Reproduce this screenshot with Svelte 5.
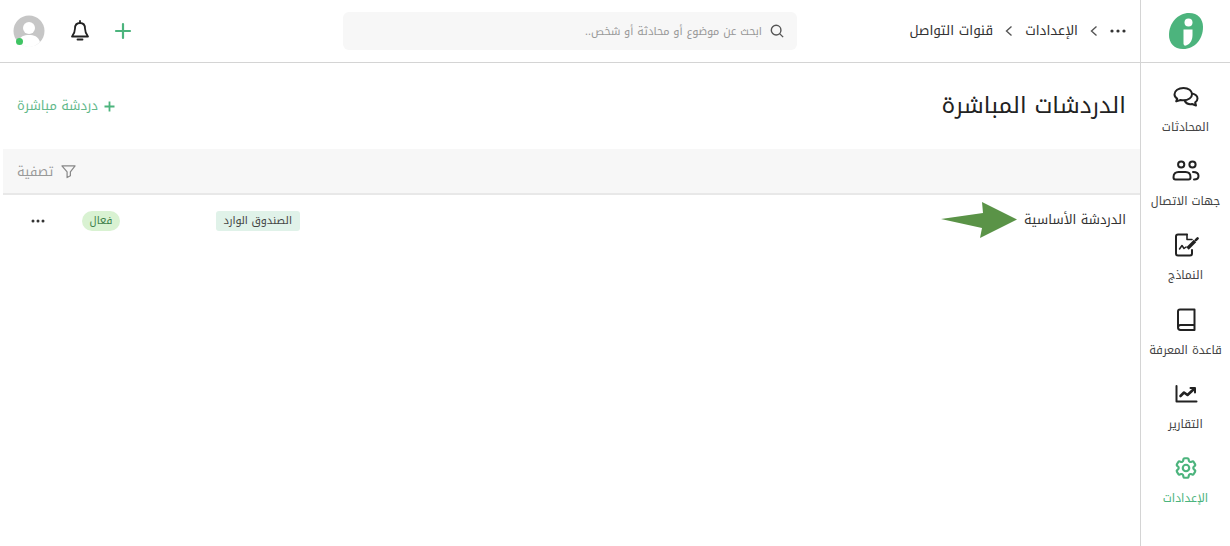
<script>
	const nav = [
		{ label: 'المحادثات', icon: 'chat' },
		{ label: 'جهات الاتصال', icon: 'people' },
		{ label: 'النماذج', icon: 'form' },
		{ label: 'قاعدة المعرفة', icon: 'book' },
		{ label: 'التقارير', icon: 'chart' },
		{ label: 'الإعدادات', icon: 'gear', active: true }
	];
</script>

<div class="app" dir="rtl">
	<aside class="sidebar">
		<div class="logo-cell">
			<svg width="36" height="38" viewBox="0 0 36 38">
				<path d="M21 1C30 1 35 7 35 15C35 27 27 37 15 37C6 37 1 31 1 23C1 11 10 1 21 1Z" fill="#4cb47d" />
				<circle cx="20.5" cy="10.5" r="4" fill="#fff" />
				<path d="M15.5 17.5H24.5V23C24.5 28 22.5 32 18 33.5C16.5 34 15.5 33 15.5 31.5Z" fill="#fff" />
			</svg>
		</div>
		<nav class="nav">
			{#each nav as item}
				<div class="nav-item" class:active={item.active}>
					<svg class="nav-icon" width="28" height="26" viewBox="0 0 28 26" fill="none" stroke="currentColor" stroke-width="2" stroke-linecap="round" stroke-linejoin="round">
						{#if item.icon === 'chat'}
							<path d="M11.5 4C6.5 4 2.5 6.6 2.5 10.2C2.5 12.2 3.6 13.7 5.2 14.6L4.2 17.4L8.6 16C9.4 16.2 10.4 16.3 11.5 16.3C16.5 16.3 20 13.6 20 10.2C20 6.6 16.5 4 11.5 4Z" />
							<path d="M20 9.4C23.2 10.2 25.5 12 25.5 14.6C25.5 16.3 24.5 17.6 23.2 18.4L24 21.5L20 20C17.6 20.6 14.6 19.8 13 17.4" />
						{:else if item.icon === 'people'}
							<circle cx="9.2" cy="6.5" r="3.1" />
							<circle cx="20.5" cy="6.5" r="3.1" />
							<path d="M3.5 21.5C2 21.5 1.5 20.5 1.5 19.2C1.5 15.8 3.5 14 6.5 14H13.5C16.5 14 18.5 15.8 18.5 19.2C18.5 20.5 18 21.5 16.5 21.5Z" />
							<path d="M21 14C24.5 14 26.5 15.8 26.5 18C26.5 20.2 25 21.5 22 21.5" />
						{:else if item.icon === 'form'}
							<path d="M15 2.5H6C4.9 2.5 4 3.4 4 4.5V21.5C4 22.6 4.9 23.5 6 23.5H18C19.1 23.5 20 22.6 20 21.5V18" />
							<path d="M15 2.5V7.5H20" stroke-width="1.6" />
							<path d="M7.5 17L10 13.5L12 16.5L14 15" stroke-width="1.5" />
							<path d="M15.5 16.5L23 9" stroke-width="3.4" stroke-linecap="butt" />
							<path d="M23.8 8.2L25.6 6.4" stroke-width="2.6" />
						{:else if item.icon === 'book'}
							<path d="M6 20V4.5C6 3.4 6.9 2.5 8 2.5H22.5V23H8.5C7 23 6 22 6 20.6C6 19.2 7 18 8.5 18H22.5" />
						{:else if item.icon === 'chart'}
							<path d="M4.5 5V20.5H24.5" />
							<path d="M8.5 15L12 11.5L15.5 14L22 8" stroke-width="2.6" />
							<path d="M18.5 7H23V11.5" stroke-width="2" />
						{:else}
							<g transform="translate(1.04 0.04) scale(1.08)" stroke-width="2">
								<path d="M9.594 3.94c.09-.542.56-.94 1.11-.94h2.593c.55 0 1.02.398 1.11.94l.213 1.281c.063.374.313.686.645.87.074.04.147.083.22.127.325.196.72.257 1.075.124l1.217-.456a1.125 1.125 0 0 1 1.37.49l1.296 2.247a1.125 1.125 0 0 1-.26 1.431l-1.003.827c-.293.241-.438.613-.43.992a7.723 7.723 0 0 1 0 .255c-.008.378.137.75.43.991l1.004.827c.424.35.534.955.26 1.43l-1.298 2.247a1.125 1.125 0 0 1-1.369.491l-1.217-.456c-.355-.133-.75-.072-1.076.124a6.47 6.47 0 0 1-.22.128c-.331.183-.581.495-.644.869l-.213 1.281c-.09.543-.56.94-1.11.94h-2.594c-.55 0-1.019-.398-1.11-.94l-.213-1.281c-.062-.374-.312-.686-.644-.87a6.52 6.52 0 0 1-.22-.127c-.325-.196-.72-.257-1.076-.124l-1.217.456a1.125 1.125 0 0 1-1.369-.49l-1.297-2.247a1.125 1.125 0 0 1 .26-1.431l1.004-.827c.292-.24.437-.613.43-.991a6.932 6.932 0 0 1 0-.255c.007-.38-.138-.751-.43-.992l-1.004-.827a1.125 1.125 0 0 1-.26-1.43l1.297-2.247a1.125 1.125 0 0 1 1.37-.491l1.216.456c.356.133.751.072 1.076-.124.072-.044.146-.086.22-.128.332-.183.582-.495.644-.869l.214-1.28Z" />
								<circle cx="12" cy="12" r="3" />
							</g>
						{/if}
					</svg>
					<span class="nav-label">{item.label}</span>
				</div>
			{/each}
		</nav>
	</aside>

	<div class="main">
		<header class="topbar">
			<div class="crumbs">
				<svg width="16" height="4" viewBox="0 0 16 4" fill="#333"><circle cx="2" cy="2" r="1.6" /><circle cx="8" cy="2" r="1.6" /><circle cx="14" cy="2" r="1.6" /></svg>
				<svg width="10" height="12" viewBox="0 0 10 12" fill="none" stroke="#555" stroke-width="1.4"><path d="M7.5 1.5L2.5 6L7.5 10.5" /></svg>
				<span>الإعدادات</span>
				<svg width="10" height="12" viewBox="0 0 10 12" fill="none" stroke="#555" stroke-width="1.4"><path d="M7.5 1.5L2.5 6L7.5 10.5" /></svg>
				<span>قنوات التواصل</span>
			</div>
			<div class="search">
				<svg width="14" height="14" viewBox="0 0 16 16" fill="none" stroke="#555" stroke-width="1.6"><circle cx="7" cy="7" r="5.5" /><path d="M11 11L15 15" /></svg>
				<span>ابحث عن موضوع أو محادثة أو شخص..</span>
			</div>
			<div class="actions">
				<svg class="plus" width="18" height="18" viewBox="0 0 18 18" stroke="#4cb47d" stroke-width="2.2" stroke-linecap="round"><path d="M9 2V16M2 9H16" /></svg>
				<svg class="bell" width="22" height="24" viewBox="0 0 22 24" fill="none" stroke="#222" stroke-width="1.8" stroke-linejoin="round" stroke-linecap="round">
					<path d="M11 4C7.5 4 6 6.5 6 9.5C6 13.5 5 15 3 17.5H19C17 15 16 13.5 16 9.5C16 6.5 14.5 4 11 4Z" />
					<path d="M11 2V4M8.5 20.5H13.5" />
				</svg>
				<div class="avatar">
					<svg width="32" height="32" viewBox="0 0 32 32">
						<circle cx="16" cy="16" r="15.5" fill="#c6c6c6" />
						<circle cx="16" cy="13" r="6" fill="#fff" />
						<path d="M5 27C7 21 11 20 16 20C21 20 25 21 27 27C24 30 20 32 16 32C12 32 8 30 5 27Z" fill="#fff" />
					</svg>
					<span class="status"></span>
				</div>
			</div>
		</header>

		<section class="page">
			<div class="page-head">
				<h1>الدردشات المباشرة</h1>
				<div class="add">
					<svg width="11" height="11" viewBox="0 0 11 11" stroke="#4cb47d" stroke-width="1.8"><path d="M5.5 0.5V10.5M0.5 5.5H10.5" /></svg>
					<span>دردشة مباشرة</span>
				</div>
			</div>
			<div class="filter-bar">
				<div class="filter">
					<svg width="15" height="15" viewBox="0 0 16 16" fill="none" stroke="#888" stroke-width="1.3" stroke-linejoin="round"><path d="M1 2H15L10 8.5V12.5L6.5 14.5V8.5Z" /></svg>
					<span>تصفية</span>
				</div>
			</div>
			<div class="row">
				<div class="row-name">
					<span>الدردشة الأساسية</span>
					<svg class="arrow" width="76" height="38" viewBox="0 0 76 38"><path d="M0 18L42 12L41 1L76 18.5L39 37L41 27Z" fill="#5a9347" /></svg>
				</div>
				<span class="tag">الصندوق الوارد</span>
				<span class="pill">فعال</span>
				<svg class="more" width="14" height="4" viewBox="0 0 14 4" fill="#333"><circle cx="2" cy="2" r="1.5" /><circle cx="7" cy="2" r="1.5" /><circle cx="12" cy="2" r="1.5" /></svg>
			</div>
		</section>
	</div>
</div>

<style>
	:global(body) {
		margin: 0;
		background: #fff;
		font-family: 'Noto Kufi Arabic', 'DejaVu Sans', sans-serif;
		color: #333;
	}

	.app {
		display: flex;
		height: 546px;
		overflow: hidden;
	}

	.sidebar {
		width: 89px;
		flex-shrink: 0;
		border-left: 1px solid #d4d4d4;
		display: flex;
		flex-direction: column;
	}

	.logo-cell {
		height: 62px;
		border-bottom: 1px solid #d4d4d4;
		display: flex;
		align-items: center;
		justify-content: center;
	}

	.nav {
		display: flex;
		flex-direction: column;
		padding-top: 21px;
	}

	.nav-item {
		height: 74.2px;
		display: flex;
		flex-direction: column;
		align-items: center;
		color: #222;
	}

	.nav-icon {
		margin-bottom: 9px;
	}

	.nav-label {
		font-size: 11.6px;
		line-height: 16px;
		color: #444;
		white-space: nowrap;
	}

	.nav-item.active,
	.nav-item.active .nav-label {
		color: #4cb47d;
	}

	.main {
		flex: 1;
		min-width: 0;
		display: flex;
		flex-direction: column;
	}

	.topbar {
		height: 62px;
		border-bottom: 1px solid #d4d4d4;
		display: flex;
		align-items: center;
		padding: 0 14px 0 13px;
	}

	.crumbs {
		display: flex;
		align-items: center;
		gap: 11px;
		font-size: 13.5px;
		line-height: 18px;
		color: #333;
		width: 329px;
		flex-shrink: 0;
	}

	.search {
		width: 454px;
		height: 38px;
		box-sizing: border-box;
		background: #f7f7f7;
		border-radius: 6px;
		display: flex;
		align-items: center;
		gap: 8px;
		padding: 0 13px;
		font-size: 11px;
		color: #999;
		flex-shrink: 0;
	}

	.actions {
		margin-right: auto;
		display: flex;
		align-items: center;
		gap: 24px;
	}

	.actions svg {
		flex-shrink: 0;
	}

	.plus {
		margin-left: -1px;
	}

	.avatar {
		position: relative;
		width: 32px;
		height: 32px;
	}

	.status {
		position: absolute;
		left: 3px;
		bottom: 2px;
		width: 7px;
		height: 7px;
		border-radius: 50%;
		background: #3fc463;
	}

	.page {
		flex: 1;
		padding-left: 3px;
	}

	.page-head {
		height: 86px;
		display: flex;
		align-items: center;
		justify-content: space-between;
		padding: 0 14px;
	}

	h1 {
		margin: 0;
		font-size: 23px;
		line-height: 32px;
		font-weight: 400;
		color: #222;
	}

	.add {
		display: flex;
		align-items: center;
		gap: 6px;
		font-size: 13px;
		line-height: 18px;
		color: #63b98b;
	}

	.filter-bar {
		height: 43px;
		background: #f7f7f7;
		border-bottom: 2px solid #e8e8e8;
		display: flex;
		align-items: center;
		justify-content: flex-end;
		padding: 1px 14px 0;
	}

	.filter {
		display: flex;
		align-items: center;
		gap: 8px;
		font-size: 13px;
		line-height: 20px;
		color: #999;
	}

	.row {
		height: 50px;
		display: grid;
		grid-template-columns: 1fr 180px 62px 55px;
		align-items: center;
		padding-right: 14px;
		font-size: 13px;
		line-height: 18px;
		color: #333;
	}

	.row-name {
		white-space: nowrap;
		display: flex;
		align-items: center;
		gap: 7px;
	}

	.arrow {
		flex-shrink: 0;
	}

	.tag {
		justify-self: start;
		margin-top: 2px;
		background: #e0f2e9;
		border-radius: 3px;
		padding: 1px 8px;
		font-size: 10.7px;
		line-height: 18px;
		color: #444;
		white-space: nowrap;
	}

	.pill {
		justify-self: start;
		margin-top: 2px;
		background: #d9f2d2;
		border-radius: 10px;
		padding: 1px 7.5px;
		font-size: 10.5px;
		line-height: 18px;
		color: #3d7f4a;
	}

	.more {
		justify-self: start;
		margin-top: 2px;
		margin-right: 13px;
	}
</style>
